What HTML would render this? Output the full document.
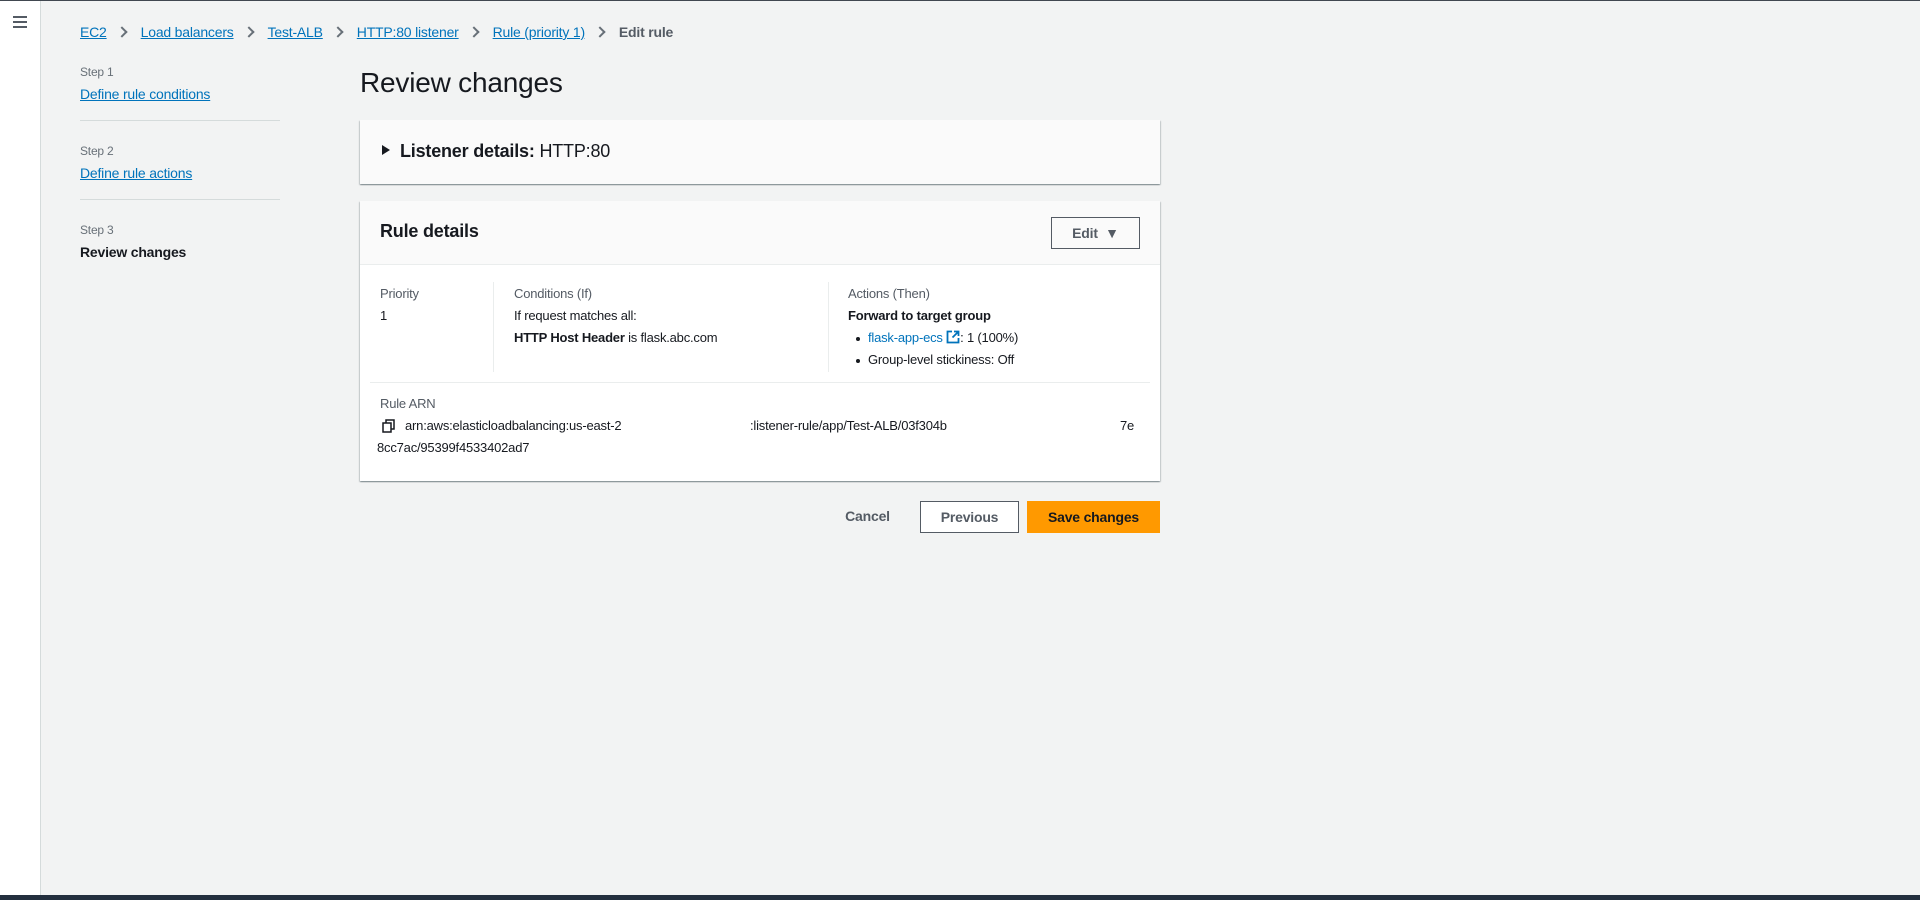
<!DOCTYPE html>
<html><head><meta charset="utf-8"><style>
*{box-sizing:border-box;margin:0;padding:0}
body{width:1920px;height:900px;background:#f2f3f3;font-family:"Liberation Sans",sans-serif;font-size:13px;color:#16191f;position:relative;overflow:hidden;letter-spacing:-0.2px}
.topline{position:absolute;left:0;top:0;width:1920px;height:1px;background:#414750}
.side{position:absolute;left:0;top:1px;width:41px;height:894px;background:#fff;border-right:1px solid #d5dbdb}
.bottom{position:absolute;left:0;top:895px;width:1920px;height:5px;background:#232f3e}
.burger{position:absolute;left:13px;top:15px;width:14px}
.burger i{display:block;height:2px;background:#545b64;margin-bottom:3px}
a{color:#0073bb;text-decoration:underline}
.bc{position:absolute;left:80px;top:24px;display:flex;align-items:center;font-size:14px}
.bc .sep{width:8px;height:8px;border-right:2px solid #687078;border-top:2px solid #687078;transform:rotate(45deg);margin:0 15px 0 11px}
.bc b{color:#545b64}
.steps{position:absolute;left:80px;top:65px;width:200px}
.steps .lab{color:#687078;font-size:12px;margin-bottom:7px}
.steps .st{padding-bottom:18px;border-bottom:1px solid #d5dbdb;margin-bottom:23px;font-size:14px}
h1{position:absolute;left:360px;top:67px;font-size:28px;font-weight:normal}
.card{position:absolute;left:360px;width:800px;background:#fff;box-shadow:0 1px 1px rgba(0,28,36,.3),1px 1px 1px rgba(0,28,36,.15),-1px 1px 1px rgba(0,28,36,.15)}
.c1{top:120px;height:64px;background:#fafafa}
.c1 .t{position:absolute;left:22px;top:21px;font-size:18px}
.tri{display:inline-block;width:0;height:0;border-left:8px solid #16191f;border-top:5px solid transparent;border-bottom:5px solid transparent;margin-right:10px;vertical-align:2px}
.c2{top:201px;height:280px}
.hd{height:64px;background:#fafafa;border-bottom:1px solid #eaeded;position:relative}
.hd .t{position:absolute;left:20px;top:20px;font-size:18px;font-weight:bold}
.edit{position:absolute;right:20px;top:16px;width:89px;height:32px;border:1px solid #545b64;color:#545b64;font-weight:bold;font-size:14px;text-align:center;line-height:30px}
.col{position:absolute;top:82px;font-size:13px;line-height:22px}
.gl{color:#545b64}
.vd{position:absolute;top:81px;width:1px;height:90px;background:#eaeded}
.hr{position:absolute;left:10px;right:10px;top:181px;height:1px;background:#eaeded}
.btn{position:absolute;top:501px;height:32px;font-weight:bold;font-size:14px;text-align:center;line-height:30px}
.bl{position:relative;padding-left:20px}
.bl:before{content:"";position:absolute;left:8px;top:10px;width:4px;height:4px;border-radius:50%;background:#16191f}
</style></head><body>
<div class="topline"></div>
<div class="side"><div class="burger"><i></i><i></i><i></i></div></div>
<div class="bottom"></div>
<div class="bc"><a>EC2</a><span class="sep"></span><a>Load balancers</a><span class="sep"></span><a>Test-ALB</a><span class="sep"></span><a>HTTP:80 listener</a><span class="sep"></span><a>Rule (priority 1)</a><span class="sep"></span><b>Edit rule</b></div>
<div class="steps">
<div class="lab">Step 1</div><div class="st"><a>Define rule conditions</a></div>
<div class="lab">Step 2</div><div class="st"><a>Define rule actions</a></div>
<div class="lab">Step 3</div><div style="font-size:14px;font-weight:bold">Review changes</div>
</div>
<h1>Review changes</h1>
<div class="card c1"><div class="t"><span class="tri"></span><b>Listener details:</b> HTTP:80</div></div>
<div class="card c2">
<div class="hd"><div class="t">Rule details</div><div class="edit">Edit &nbsp;▼</div></div>
<div class="col" style="left:20px"><div class="gl">Priority</div><div>1</div></div>
<div class="vd" style="left:133px"></div>
<div class="col" style="left:154px"><div class="gl">Conditions (If)</div><div>If request matches all:</div><div><b>HTTP Host Header</b> is flask.abc.com</div></div>
<div class="vd" style="left:468px"></div>
<div class="col" style="left:488px"><div class="gl">Actions (Then)</div><div><b>Forward to target group</b></div>
<div class="bl"><span style="color:#0073bb">flask-app-ecs</span> <svg width="14" height="14" viewBox="0 0 14 14" style="vertical-align:-2px"><path d="M6 1.5H1.5v11h11V8M8 1.5h4.5V6M12.5 1.5L6.5 7.5" fill="none" stroke="#0073bb" stroke-width="1.8"/></svg>: 1 (100%)</div>
<div class="bl">Group-level stickiness: Off</div></div>
<div class="hr"></div>
<div class="col" style="left:20px;top:192px;width:770px"><div class="gl">Rule ARN</div>
<div style="position:relative;height:22px"><svg width="14" height="14" viewBox="0 0 14 14" style="position:absolute;left:2px;top:4px"><rect x="1" y="4" width="8" height="9" fill="none" stroke="#16191f" stroke-width="1.5"/><path d="M4 4V1h8v9H9" fill="none" stroke="#16191f" stroke-width="1.5"/></svg><span style="position:absolute;left:25px">arn:aws:elasticloadbalancing:us-east-2</span><span style="position:absolute;left:370px">:listener-rule/app/Test-ALB/03f304b</span><span style="position:absolute;left:740px">7e</span></div>
<div style="margin-left:-3px">8cc7ac/95399f4533402ad7</div></div>
</div>
<div class="btn" style="left:845px;width:45px;color:#545b64">Cancel</div>
<div class="btn" style="left:920px;width:99px;border:1px solid #545b64;background:#fff;color:#545b64">Previous</div>
<div class="btn" style="left:1027px;width:133px;background:#ff9900;color:#16191f;border:1px solid #ff9900">Save changes</div>
</body></html>
